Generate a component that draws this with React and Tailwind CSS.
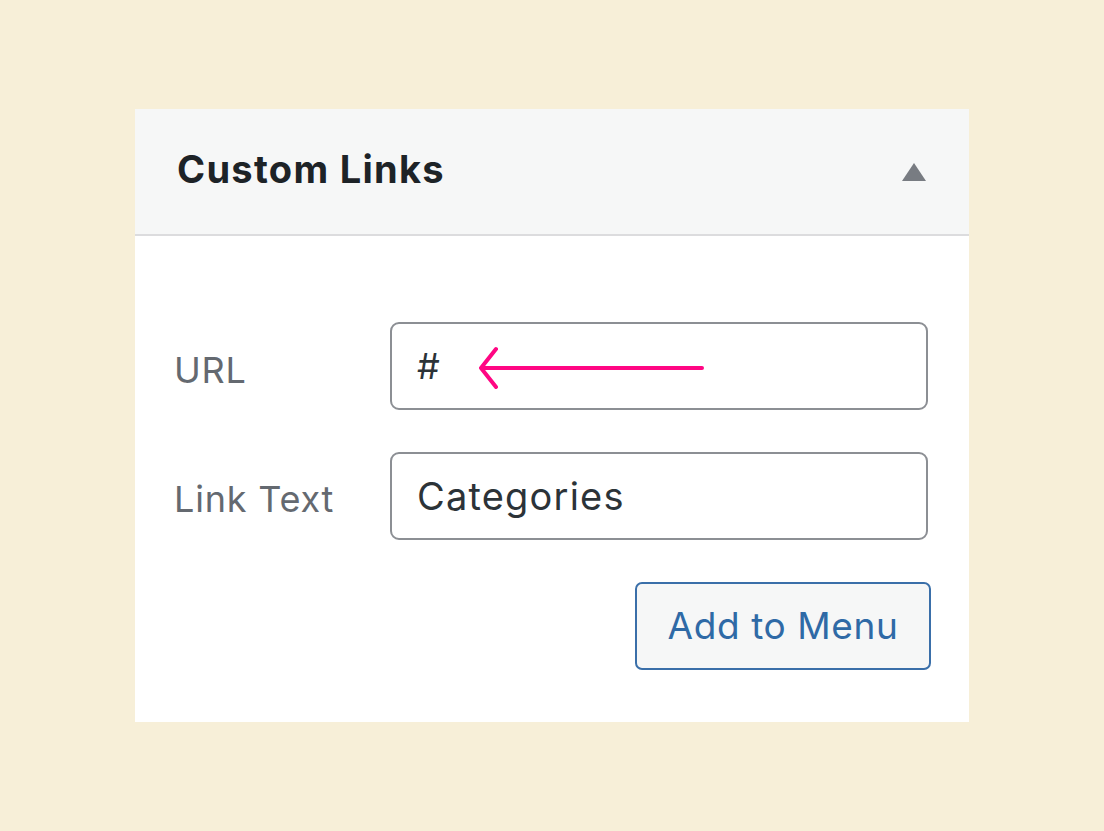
export default function App() {
  return (
    <div className="w-full h-[831px] bg-[#f7efd8] pt-[109px] pl-[135px] font-['Inter','Liberation_Sans',sans-serif]">
      <div className="w-[834px] h-[613px] bg-white flex flex-col">
        {/* Header */}
        <div className="h-[127px] bg-[#f6f7f7] border-b-2 border-[#dcdcde] flex items-center justify-between pl-[42px] pr-[43px]">
          <h2 className="text-[38px] font-bold text-[#1d2327] tracking-[1.3px] mb-[4px]">Custom Links</h2>
          <svg width="24" height="18" viewBox="0 0 24 18">
            <path d="M12 0 L24 18 L0 18 Z" fill="#787c82" />
          </svg>
        </div>

        {/* Body */}
        <div className="flex flex-col pt-[86px] pl-[39px] pr-[41px]">
          <div className="flex items-center">
            <label className="w-[216px] text-[36px] text-[#646970] tracking-[0.8px] pt-[8px]">URL</label>
            <div className="relative flex-1 h-[88px] border-2 border-[#8c8f94] rounded-[9px] flex items-center pl-[25px] text-[36px] text-[#2c3338]">
              #
              <svg className="absolute left-[86px] top-[21px]" width="230" height="46" viewBox="0 0 230 46">
                <path d="M224 23 H5 M18 4 L3 23 L18 42" fill="none" stroke="#ff0683" strokeWidth="4" strokeLinecap="round" strokeLinejoin="round" />
              </svg>
            </div>
          </div>
          <div className="flex items-center mt-[42px]">
            <label className="w-[216px] text-[36px] text-[#646970] tracking-[0.8px] pt-[6px]">Link Text</label>
            <div className="flex-1 h-[88px] border-2 border-[#8c8f94] rounded-[9px] flex items-center pl-[25px] text-[38px] text-[#2c3338] tracking-[1.2px]">
              Categories
            </div>
          </div>
          <div className="flex justify-end mt-[42px] mr-[-3px]">
            <button className="w-[296px] h-[88px] border-2 border-[#3a6fa9] rounded-[7px] bg-[#f6f7f7] text-[37px] text-[#2f6aa6] tracking-[0.6px]">
              Add to Menu
            </button>
          </div>
        </div>
      </div>
    </div>
  );
}
